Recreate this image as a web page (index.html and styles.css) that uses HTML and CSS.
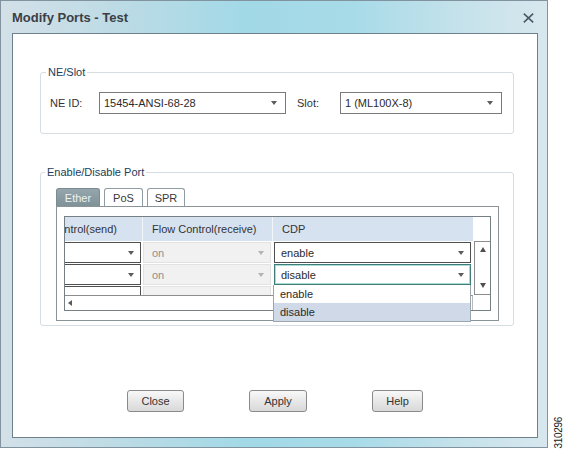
FILE: index.html
```html
<!DOCTYPE html>
<html>
<head>
<meta charset="utf-8">
<title>Modify Ports - Test</title>
<link rel="stylesheet" href="styles.css">
</head>
<body>
<div class="page">
  <div class="window">
    <div class="titlebar">
      <span class="title">Modify Ports - Test</span>
      <svg class="close" width="11" height="10" viewBox="0 0 11 10"><path d="M0.8 0.6 L10.2 9.4 M10.2 0.6 L0.8 9.4" stroke="#4a5661" stroke-width="1.5" fill="none"/></svg>
    </div>
    <div class="client">
      <fieldset class="group group-ne">
        <legend>NE/Slot</legend>
        <div class="group-body ne-body">
          <span class="lbl lbl-ne">NE ID:</span>
          <div class="combo combo-ne"><span class="combo-text">15454-ANSI-68-28</span><span class="arrow"></span></div>
          <span class="lbl lbl-slot">Slot:</span>
          <div class="combo combo-slot"><span class="combo-text">1 (ML100X-8)</span><span class="arrow"></span></div>
        </div>
      </fieldset>

      <fieldset class="group group-port">
        <legend>Enable/Disable Port</legend>
        <div class="group-body port-body">
          <div class="tabs">
            <div class="tab tab-ether active">Ether</div>
            <div class="tab tab-pos">PoS</div>
            <div class="tab tab-spr">SPR</div>
          </div>
          <div class="tab-panel">
            <div class="grid-box">
              <div class="grid-main">
                <div class="viewport">
                  <div class="track">
                    <div class="hdr-row">
                      <div class="hcell c1">Flow Control(send)</div>
                      <div class="hcell c2">Flow Control(receive)</div>
                      <div class="hcell c3">CDP</div>
                    </div>
                    <div class="row">
                      <div class="cell c1"><div class="combo cell-combo dark"><span class="arrow"></span></div></div>
                      <div class="cell c2"><div class="combo cell-combo disabled"><span class="combo-text">on</span><span class="arrow"></span></div></div>
                      <div class="cell c3"><div class="combo cell-combo dark"><span class="combo-text">enable</span><span class="arrow"></span></div></div>
                    </div>
                    <div class="row">
                      <div class="cell c1"><div class="combo cell-combo dark"><span class="arrow"></span></div></div>
                      <div class="cell c2"><div class="combo cell-combo disabled"><span class="combo-text">on</span><span class="arrow"></span></div></div>
                      <div class="cell c3"><div class="combo cell-combo focused"><span class="combo-text">disable</span><span class="arrow"></span></div></div>
                    </div>
                    <div class="row">
                      <div class="cell c1"><div class="combo cell-combo dark"><span class="arrow"></span></div></div>
                      <div class="cell c2"><div class="combo cell-combo disabled"><span class="combo-text">on</span><span class="arrow"></span></div></div>
                      <div class="cell c3"><div class="combo cell-combo dark"><span class="arrow"></span></div></div>
                    </div>
                  </div>
                </div>
                <div class="hscroll"><span class="arr-left"></span></div>
              </div>
              <div class="vcol">
                <div class="vhead"></div>
                <div class="vscroll"><span class="arr-up"></span><span class="arr-down"></span></div>
                <div class="corner"></div>
              </div>
              <div class="dropdown">
                <div class="opt">enable</div>
                <div class="opt selected">disable</div>
              </div>
            </div>
          </div>
        </div>
      </fieldset>

      <div class="buttons">
        <div class="btn btn-close">Close</div>
        <div class="btn btn-apply">Apply</div>
        <div class="btn btn-help">Help</div>
      </div>
    </div>
  </div>
  <div class="fig"><span class="fig-num">310296</span></div>
</div>
</body>
</html>
```

FILE: styles.css
```css
body {
  margin: 0;
  background: #ffffff;
  font-family: "Liberation Sans", Arial, sans-serif;
  font-size: 11px;
  color: #333333;
}

.page {
  display: flex;
  width: 572px;
  height: 451px;
}

/* ---------- window frame ---------- */
.window {
  box-sizing: border-box;
  width: 548px;
  height: 448px;
  flex: none;
  border: 1px solid #8293a0;
  padding: 0 9px 9px 11px;
  display: flex;
  flex-direction: column;
  background: linear-gradient(to right, #d3e0e8 0%, #bcdbe5 22%, #a2d9e7 45%, #a8dbe8 65%, #c6e2eb 85%, #d8e7ee 100%);
}

.titlebar {
  height: 32px;
  flex: none;
  margin: 0 -9px 0 -11px;
  padding: 0 13px 0 11px;
  display: flex;
  align-items: center;
  justify-content: space-between;
}

.title {
  font-size: 13px;
  font-weight: bold;
  color: #3b3f44;
  margin-top: 1px;
}

.close {
  display: block;
  margin-top: 1px;
}

.client {
  flex: 1;
  box-sizing: border-box;
  background: #ffffff;
  border: 1px solid #6e808c;
  display: flex;
  flex-direction: column;
}

/* ---------- group boxes ---------- */
.group {
  box-sizing: border-box;
  width: 474px;
  min-width: 0;
  margin: 32px 0 0 27px;
  padding: 0;
  border: 1px solid #d6dde2;
  border-radius: 3px;
}

.group legend {
  margin-left: 5px;
  padding: 0 2px;
  line-height: 13px;
  color: #21405a;
}

.group-port legend {
  margin-left: 4px;
}

.ne-body {
  display: flex;
  align-items: center;
  padding: 13px 11px 19px 9px;
}

.lbl-ne {
  width: 49px;
}

.lbl-slot {
  width: 43px;
  margin-left: 11px;
}

/* ---------- combo boxes ---------- */
.combo {
  box-sizing: border-box;
  height: 22px;
  border: 1px solid #7a7a7a;
  background: #ffffff;
  display: flex;
  align-items: center;
  justify-content: space-between;
  padding: 0 8px 0 4px;
  color: #2b2b2b;
}

.combo-ne {
  width: 187px;
}

.combo-slot {
  width: 162px;
}

.arrow {
  width: 0;
  height: 0;
  margin-left: auto;
  border-left: 3.5px solid transparent;
  border-right: 3.5px solid transparent;
  border-top: 4px solid #5c5c5c;
}

/* ---------- tabs ---------- */
.port-body {
  padding: 9px 14px 4px 15px;
}

.tabs {
  display: flex;
  gap: 4px;
  height: 18px;
}

.tab {
  box-sizing: border-box;
  height: 18px;
  border: 1px solid #8f9ca2;
  border-bottom: none;
  border-radius: 3px 3px 0 0;
  background: #ffffff;
  color: #3a3a3a;
  display: flex;
  align-items: center;
  justify-content: center;
}

.tab-ether {
  width: 44px;
}

.tab-pos {
  width: 39px;
}

.tab-spr {
  width: 38px;
}

.tab.active {
  background: linear-gradient(#95a6ac, #7f9298);
  border-color: #7b8b91;
  color: #eef3f5;
}

.tab-panel {
  box-sizing: border-box;
  width: 443px;
  border: 1px solid #8a9499;
  padding: 9px 7px;
  background: #ffffff;
}

/* ---------- table ---------- */
.grid-box {
  position: relative;
  box-sizing: border-box;
  width: 427px;
  height: 95px;
  border: 1px solid #767f84;
  display: flex;
}

.grid-main {
  width: 408px;
  display: flex;
  flex-direction: column;
}

.viewport {
  width: 408px;
  height: 78px;
  overflow: hidden;
}

.track {
  width: 458px;
  margin-left: -50px;
}

.hdr-row {
  display: flex;
  height: 24px;
  background: #d7e2f1;
}

.hcell {
  box-sizing: border-box;
  height: 24px;
  line-height: 24px;
  padding-left: 9px;
  white-space: nowrap;
  overflow: hidden;
  color: #333333;
}

.hcell.c1,
.hcell.c2 {
  border-right: 1px solid #f2f5fa;
}

.c1 {
  width: 128px;
}

.c2 {
  width: 130px;
}

.c3 {
  width: 200px;
}

.row {
  display: flex;
  height: 22px;
}

.cell {
  box-sizing: border-box;
  padding-top: 1px;
}

.cell.c1,
.cell.c2 {
  padding-right: 2px;
}

.cell.c3 {
  padding: 1px 2px 0 1px;
}

.cell-combo {
  height: 21px;
  padding: 0 6px 0 6px;
}

.cell-combo.dark {
  border-color: #4f4f4f;
}

.cell.c2 .cell-combo {
  padding-left: 8px;
}

.cell-combo.disabled {
  background: #f1f1f1;
  border-color: #e2e2e2;
  color: #8f8f8f;
}

.cell-combo.disabled .arrow {
  border-top-color: #b3b3b3;
}

.cell-combo.focused {
  border-color: #3f7d78;
  box-shadow: inset 0 0 0 1px #a9dcd5;
}

.hscroll {
  box-sizing: border-box;
  height: 15px;
  border-top: 1px solid #8d8d8d;
  border-right: 1px solid #b9b9b9;
  display: flex;
  align-items: center;
  padding-left: 3px;
}

.arr-left {
  width: 0;
  height: 0;
  border-top: 3px solid transparent;
  border-bottom: 3px solid transparent;
  border-right: 4px solid #5a5a5a;
}

.vcol {
  width: 17px;
  display: flex;
  flex-direction: column;
}

.vhead {
  height: 24px;
}

.vscroll {
  box-sizing: border-box;
  height: 54px;
  margin-left: 1px;
  border: 1px solid #8d8d8d;
  border-right: none;
  display: flex;
  flex-direction: column;
  align-items: center;
  justify-content: space-between;
  padding: 5px 0 6px;
}

.arr-up {
  width: 0;
  height: 0;
  border-left: 3.5px solid transparent;
  border-right: 3.5px solid transparent;
  border-bottom: 5px solid #505050;
}

.arr-down {
  width: 0;
  height: 0;
  border-left: 3.5px solid transparent;
  border-right: 3.5px solid transparent;
  border-top: 5px solid #505050;
}

.corner {
  flex: 1;
}

/* popup list over the table */
.dropdown {
  position: absolute;
  left: 208px;
  top: 68px;
  box-sizing: border-box;
  width: 198px;
  border: 1px solid #9aa6ae;
  border-top: none;
  background: #ffffff;
  z-index: 2;
}

.opt {
  height: 18px;
  line-height: 18px;
  padding-left: 6px;
  color: #2a2a2a;
}

.opt.selected {
  background: #cfd9e8;
}

/* ---------- buttons ---------- */
.buttons {
  display: flex;
  gap: 65px;
  margin-top: 64px;
  padding-left: 114px;
}

.btn {
  box-sizing: border-box;
  height: 22px;
  border: 1px solid #8a8a8a;
  border-radius: 3px;
  background: linear-gradient(#f8f8f8, #e6e6e6 55%, #d9d9d9);
  display: flex;
  align-items: center;
  justify-content: center;
  color: #333333;
}

.btn-close {
  width: 57px;
}

.btn-apply {
  width: 58px;
}

.btn-help {
  width: 51px;
}

/* ---------- figure number ---------- */
.fig {
  flex: 1;
  height: 449px;
  display: flex;
  flex-direction: column;
  justify-content: flex-end;
  align-items: center;
  padding-right: 3px;
}

.fig-num {
  writing-mode: vertical-rl;
  transform: rotate(180deg);
  font-size: 10px;
  letter-spacing: -0.3px;
  color: #222222;
}
```
